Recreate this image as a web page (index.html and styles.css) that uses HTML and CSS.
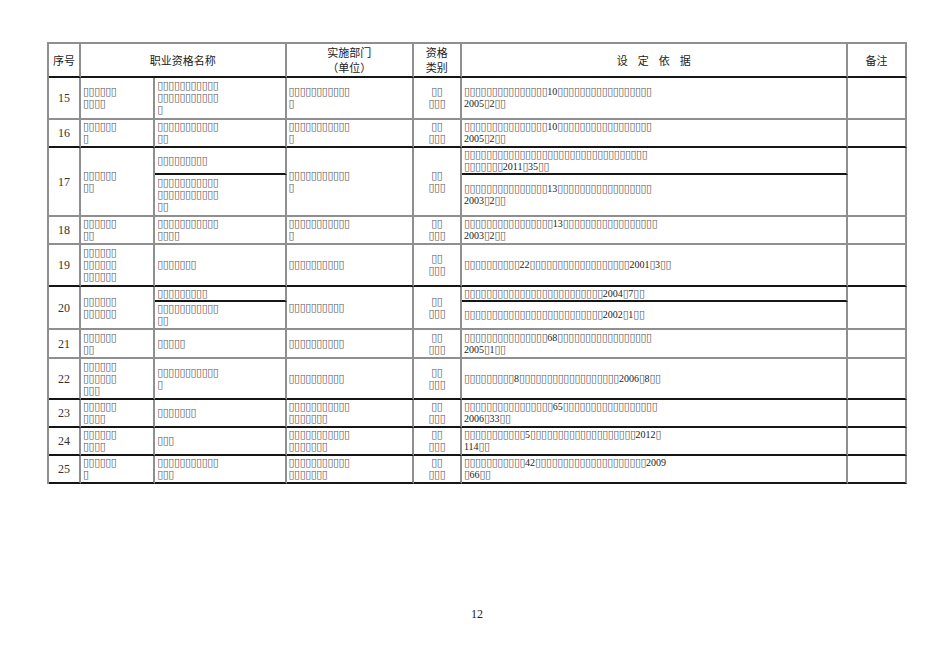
FILE: index.html
```html
<!DOCTYPE html>
<html lang="zh-CN">
<head>
<meta charset="utf-8">
<title>职业资格</title>
<link rel="stylesheet" href="styles.css">
</head>
<body>
<div class="page">
<table class="grid">
<colgroup>
<col class="w1"><col class="w2"><col class="w3"><col class="w4"><col class="w5"><col class="w6"><col class="w7">
</colgroup>
<thead>
<tr class="h34">
<th class="bk">序号</th>
<th class="bk" colspan="2">职业资格名称</th>
<th class="bk">实施部门<br>（单位）</th>
<th class="bk">资格<br>类别</th>
<th class="bk"><span class="sp">设定依据</span></th>
<th class="bk">备注</th>
</tr>
</thead>
<tbody>
<tr class="h42">
<td class="n">15</td>
<td><span class="q">▯▯▯▯▯▯</span><br><span class="q">▯▯▯▯</span></td>
<td><span class="q">▯▯▯▯▯▯▯▯▯▯▯</span><br><span class="q">▯▯▯▯▯▯▯▯▯▯▯</span><br><span class="q">▯</span></td>
<td><span class="q">▯▯▯▯▯▯▯▯▯▯▯</span><br><span class="q">▯</span></td>
<td class="c"><span class="q">▯▯</span><br><span class="q">▯▯▯</span></td>
<td><span class="q">▯▯▯▯▯▯▯▯▯▯▯▯▯▯▯</span>10<span class="q">▯▯▯▯▯▯▯▯▯▯▯▯▯▯▯▯▯</span><br>2005<span class="q">▯</span>2<span class="q">▯▯</span></td>
<td></td>
</tr>
<tr class="h28">
<td class="n bk">16</td>
<td class="bk"><span class="q">▯▯▯▯▯▯</span><br><span class="q">▯</span></td>
<td class="bk"><span class="q">▯▯▯▯▯▯▯▯▯▯▯</span><br><span class="q">▯▯</span></td>
<td class="bk"><span class="q">▯▯▯▯▯▯▯▯▯▯▯</span><br><span class="q">▯</span></td>
<td class="c bk"><span class="q">▯▯</span><br><span class="q">▯▯▯</span></td>
<td class="bk"><span class="q">▯▯▯▯▯▯▯▯▯▯▯▯▯▯▯</span>10<span class="q">▯▯▯▯▯▯▯▯▯▯▯▯▯▯▯▯▯</span><br>2005<span class="q">▯</span>2<span class="q">▯▯</span></td>
<td class="bk"></td>
</tr>
<tr class="h27">
<td class="n" rowspan="2">17</td>
<td rowspan="2"><span class="q">▯▯▯▯▯▯</span><br><span class="q">▯▯</span></td>
<td class="bk"><span class="q">▯▯▯▯▯▯▯▯▯</span></td>
<td rowspan="2"><span class="q">▯▯▯▯▯▯▯▯▯▯▯</span><br><span class="q">▯</span></td>
<td class="c" rowspan="2"><span class="q">▯▯</span><br><span class="q">▯▯▯</span></td>
<td class="bk"><span class="q">▯▯▯▯▯▯▯▯▯▯▯▯▯▯▯▯▯▯▯▯▯▯▯▯▯▯▯▯▯▯▯▯▯</span><br><span class="q">▯▯▯▯▯▯▯</span>2011<span class="q">▯</span>35<span class="q">▯▯</span></td>
<td rowspan="2"></td>
</tr>
<tr class="h42">
<td><span class="q">▯▯▯▯▯▯▯▯▯▯▯</span><br><span class="q">▯▯▯▯▯▯▯▯▯▯▯</span><br><span class="q">▯▯</span></td>
<td><span class="q">▯▯▯▯▯▯▯▯▯▯▯▯▯▯▯</span>13<span class="q">▯▯▯▯▯▯▯▯▯▯▯▯▯▯▯▯▯</span><br>2003<span class="q">▯</span>2<span class="q">▯▯</span></td>
</tr>
<tr class="h28">
<td class="n">18</td>
<td><span class="q">▯▯▯▯▯▯</span><br><span class="q">▯▯</span></td>
<td><span class="q">▯▯▯▯▯▯▯▯▯▯▯</span><br><span class="q">▯▯▯▯</span></td>
<td><span class="q">▯▯▯▯▯▯▯▯▯▯▯</span><br><span class="q">▯</span></td>
<td class="c"><span class="q">▯▯</span><br><span class="q">▯▯▯</span></td>
<td><span class="q">▯▯▯▯▯▯▯▯▯▯▯▯▯▯▯▯</span>13<span class="q">▯▯▯▯▯▯▯▯▯▯▯▯▯▯▯▯▯</span><br>2003<span class="q">▯</span>2<span class="q">▯▯</span></td>
<td></td>
</tr>
<tr class="h42">
<td class="n bk">19</td>
<td class="bk"><span class="q">▯▯▯▯▯▯</span><br><span class="q">▯▯▯▯▯▯</span><br><span class="q">▯▯▯▯▯▯</span></td>
<td class="bk"><span class="q">▯▯▯▯▯▯▯</span></td>
<td class="bk"><span class="q">▯▯▯▯▯▯▯▯▯▯</span></td>
<td class="c bk"><span class="q">▯▯</span><br><span class="q">▯▯▯</span></td>
<td class="bk"><span class="q">▯▯▯▯▯▯▯▯▯▯</span>22<span class="q">▯▯▯▯▯▯▯▯▯▯▯▯▯▯▯▯▯▯</span>2001<span class="q">▯</span>3<span class="q">▯▯</span></td>
<td class="bk"></td>
</tr>
<tr class="h15">
<td class="n" rowspan="2">20</td>
<td rowspan="2"><span class="q">▯▯▯▯▯▯</span><br><span class="q">▯▯▯▯▯▯</span></td>
<td class="bk"><span class="q">▯▯▯▯▯▯▯▯▯</span></td>
<td rowspan="2"><span class="q">▯▯▯▯▯▯▯▯▯▯</span></td>
<td class="c" rowspan="2"><span class="q">▯▯</span><br><span class="q">▯▯▯</span></td>
<td class="bk"><span class="q">▯▯▯▯▯▯▯▯▯▯▯▯▯▯▯▯▯▯▯▯▯▯▯▯▯</span>2004<span class="q">▯</span>7<span class="q">▯▯</span></td>
<td rowspan="2"></td>
</tr>
<tr class="h28">
<td><span class="q">▯▯▯▯▯▯▯▯▯▯▯</span><br><span class="q">▯▯</span></td>
<td><span class="q">▯▯▯▯▯▯▯▯▯▯▯▯▯▯▯▯▯▯▯▯▯▯▯▯▯</span>2002<span class="q">▯</span>1<span class="q">▯▯</span></td>
</tr>
<tr class="h29">
<td class="n">21</td>
<td><span class="q">▯▯▯▯▯▯</span><br><span class="q">▯▯</span></td>
<td><span class="q">▯▯▯▯▯</span></td>
<td><span class="q">▯▯▯▯▯▯▯▯▯▯</span></td>
<td class="c"><span class="q">▯▯</span><br><span class="q">▯▯▯</span></td>
<td><span class="q">▯▯▯▯▯▯▯▯▯▯▯▯▯▯▯</span>68<span class="q">▯▯▯▯▯▯▯▯▯▯▯▯▯▯▯▯▯</span><br>2005<span class="q">▯</span>1<span class="q">▯▯</span></td>
<td></td>
</tr>
<tr class="h41">
<td class="n bk">22</td>
<td class="bk"><span class="q">▯▯▯▯▯▯</span><br><span class="q">▯▯▯▯▯▯</span><br><span class="q">▯▯▯</span></td>
<td class="bk"><span class="q">▯▯▯▯▯▯▯▯▯▯▯</span><br><span class="q">▯</span></td>
<td class="bk"><span class="q">▯▯▯▯▯▯▯▯▯▯</span></td>
<td class="c bk"><span class="q">▯▯</span><br><span class="q">▯▯▯</span></td>
<td class="bk"><span class="q">▯▯▯▯▯▯▯▯▯</span>8<span class="q">▯▯▯▯▯▯▯▯▯▯▯▯▯▯▯▯▯▯</span>2006<span class="q">▯</span>8<span class="q">▯▯</span></td>
<td class="bk"></td>
</tr>
<tr class="h28">
<td class="n bk">23</td>
<td class="bk"><span class="q">▯▯▯▯▯▯</span><br><span class="q">▯▯▯▯</span></td>
<td class="bk"><span class="q">▯▯▯▯▯▯▯</span></td>
<td class="bk"><span class="q">▯▯▯▯▯▯▯▯▯▯▯</span><br><span class="q">▯▯▯▯▯▯▯</span></td>
<td class="c bk"><span class="q">▯▯</span><br><span class="q">▯▯▯</span></td>
<td class="bk"><span class="q">▯▯▯▯▯▯▯▯▯▯▯▯▯▯▯▯</span>65<span class="q">▯▯▯▯▯▯▯▯▯▯▯▯▯▯▯▯▯</span><br>2006<span class="q">▯</span>33<span class="q">▯▯</span></td>
<td class="bk"></td>
</tr>
<tr class="h28">
<td class="n bk">24</td>
<td class="bk"><span class="q">▯▯▯▯▯▯</span><br><span class="q">▯▯▯▯</span></td>
<td class="bk"><span class="q">▯▯▯</span></td>
<td class="bk"><span class="q">▯▯▯▯▯▯▯▯▯▯▯</span><br><span class="q">▯▯▯▯▯▯▯</span></td>
<td class="c bk"><span class="q">▯▯</span><br><span class="q">▯▯▯</span></td>
<td class="bk"><span class="q">▯▯▯▯▯▯▯▯▯▯▯</span>5<span class="q">▯▯▯▯▯▯▯▯▯▯▯▯▯▯▯▯▯▯▯</span>2012<span class="q">▯</span><br>114<span class="q">▯▯</span></td>
<td class="bk"></td>
</tr>
<tr class="h28">
<td class="n bk">25</td>
<td class="bk"><span class="q">▯▯▯▯▯▯</span><br><span class="q">▯</span></td>
<td class="bk"><span class="q">▯▯▯▯▯▯▯▯▯▯▯</span><br><span class="q">▯▯▯</span></td>
<td class="bk"><span class="q">▯▯▯▯▯▯▯▯▯▯▯</span><br><span class="q">▯▯▯▯▯▯▯</span></td>
<td class="c bk"><span class="q">▯▯</span><br><span class="q">▯▯▯</span></td>
<td class="bk"><span class="q">▯▯▯▯▯▯▯▯▯▯▯</span>42<span class="q">▯▯▯▯▯▯▯▯▯▯▯▯▯▯▯▯▯▯▯▯</span>2009<br><span class="q">▯</span>66<span class="q">▯▯</span></td>
<td class="bk"></td>
</tr>
</tbody>
</table>
<div class="pn">12</div>
</div>
</body>
</html>
```

FILE: styles.css
```css
html, body {
  margin: 0;
  padding: 0;
  background: #ffffff;
}

.page {
  padding: 42px 0 0 47px;
  width: 860px;
}

.grid {
  border-collapse: separate;
  border-spacing: 0;
  table-layout: fixed;
  width: 860px;
  border-top: 2px solid #8f8f8f;
  border-left: 2px solid #8f8f8f;
  font-family: "Liberation Serif", serif;
  font-size: 10px;
  color: #222;
}

.w1 { width: 32px; }
.w2 { width: 74px; }
.w3 { width: 131px; }
.w4 { width: 127px; }
.w5 { width: 48px; }
.w6 { width: 385px; }
.w7 { width: 59px; }

.grid th,
.grid td {
  box-sizing: border-box;
  border-right: 2px solid #8f8f8f;
  border-bottom: 2px solid #8f8f8f;
  padding: 0 2px;
  vertical-align: middle;
  line-height: 12px;
  text-align: left;
  white-space: nowrap;
  overflow: hidden;
}

.grid th {
  font-family: "Noto Sans CJK SC", sans-serif;
  font-weight: normal;
  font-size: 11px;
  line-height: 15px;
  text-align: center;
  color: #222;
}

.grid .bk {
  border-bottom-color: #151515;
}

.sp {
  letter-spacing: 10px;
  margin-right: -10px;
}

.grid td.n {
  text-align: center;
  font-size: 12px;
  color: #333;
}

.grid td.c {
  text-align: center;
}

.q {
  font-family: "DejaVu Sans", sans-serif;
  font-size: 11px;
  letter-spacing: -0.5px;
  color: #5c5c5c;
}

.h34 > th { height: 34px; }
.h42 > td { height: 42px; }
.h41 > td { height: 41px; }
.h29 > td { height: 29px; }
.h28 > td { height: 28px; }
.h27 > td { height: 27px; }
.h15 > td { height: 15px; }

.pn {
  width: 860px;
  margin-top: 123px;
  text-align: center;
  font-family: "Liberation Serif", serif;
  font-size: 12px;
  line-height: 14px;
  color: #222;
}
```
